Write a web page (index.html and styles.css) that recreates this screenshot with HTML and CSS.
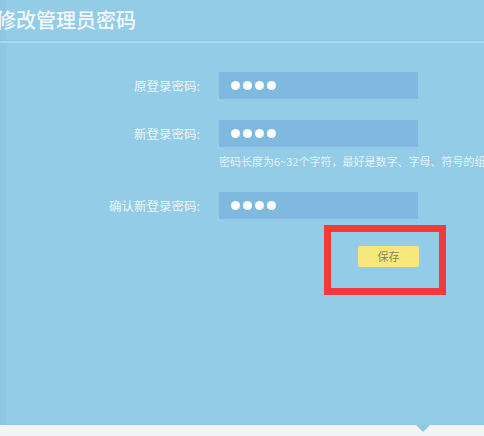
FILE: index.html
```html
<!DOCTYPE html>
<html lang="zh-CN">
<head>
<meta charset="utf-8">
<title>修改管理员密码</title>
<link rel="stylesheet" href="styles.css">
</head>
<body>
<div class="page">
  <header class="header">
    <h1 class="title">修改管理员密码</h1>
  </header>
  <main class="main">
    <form class="form">
      <label class="label">原登录密码:</label>
      <div class="input"><span class="dot"></span><span class="dot"></span><span class="dot"></span><span class="dot"></span></div>

      <label class="label row2">新登录密码:</label>
      <div class="input row2"><span class="dot"></span><span class="dot"></span><span class="dot"></span><span class="dot"></span></div>
      <p class="hint">密码长度为6~32个字符，最好是数字、字母、符号的组合</p>

      <label class="label row3">确认新登录密码:</label>
      <div class="input row3"><span class="dot"></span><span class="dot"></span><span class="dot"></span><span class="dot"></span></div>

      <div class="actions">
        <button type="button" class="save">保存</button>
        <span class="highlight"></span>
      </div>
    </form>
  </main>
  <footer class="footer">
    <span class="notch"></span>
  </footer>
</div>
</body>
</html>
```

FILE: styles.css
```css
* { box-sizing: border-box; }
html, body { margin: 0; padding: 0; }
body {
  font-family: "Noto Sans CJK SC", "Noto Sans", sans-serif;
  background: #92cbe6;
}
.page {
  width: 484px;
  height: 436px;
  display: flex;
  flex-direction: column;
  overflow: hidden;
  background: linear-gradient(to right, #8dc7e3 0, #8dc7e3 6px, #93cce7 6px);
}
.header {
  height: 43px;
  border-bottom: 2px solid #acd8ee;
  box-shadow: inset 0 -1px 0 #88c2df;
  display: flex;
  align-items: center;
}
.title {
  margin: 0 0 0 -4px;
  font-size: 20px;
  font-weight: 500;
  color: #f4fafd;
  line-height: 24px;
  padding-bottom: 1px;
}
.main {
  flex: 1;
}
.form {
  display: grid;
  grid-template-columns: 200px 199px;
  column-gap: 19px;
  align-items: center;
  padding-top: 29px;
  margin: 0;
}
.label {
  text-align: right;
  font-size: 12.5px;
  color: rgba(255, 255, 255, 0.85);
}
.input {
  height: 27px;
  background: #80b9df;
  border-radius: 1px;
  display: flex;
  align-items: center;
  gap: 3px;
  padding-left: 12px;
}
.dot {
  width: 9px;
  height: 9px;
  border-radius: 50%;
  background: #ffffff;
}
.row2 { margin-top: 21px; }
.hint {
  grid-column: 2;
  margin: 8px -80px 0 0;
  font-size: 11px;
  line-height: 13px;
  color: rgba(255, 255, 255, 0.78);
  white-space: nowrap;
}
.row3 { margin-top: 24px; }
.actions {
  grid-column: 2;
  justify-self: end;
  margin-top: 27px;
  position: relative;
  margin-right: -1px;
}
.save {
  display: block;
  width: 61px;
  height: 21px;
  border: none;
  border-radius: 2px;
  background: #f5e97b;
  color: #8a8660;
  font-family: "Noto Sans CJK SC", sans-serif;
  font-size: 11px;
  padding: 0;
  line-height: 21px;
}
.highlight {
  position: absolute;
  left: -34px;
  top: -21px;
  width: 122px;
  height: 70px;
  border: 7px solid #f23a3a;
}
.footer {
  height: 11px;
  background: #f2f4f7;
  display: flex;
  padding-left: 416px;
}
.notch {
  width: 0;
  height: 0;
  border-left: 7px solid transparent;
  border-right: 7px solid transparent;
  border-top: 7px solid #8dc7e3;
}
```
